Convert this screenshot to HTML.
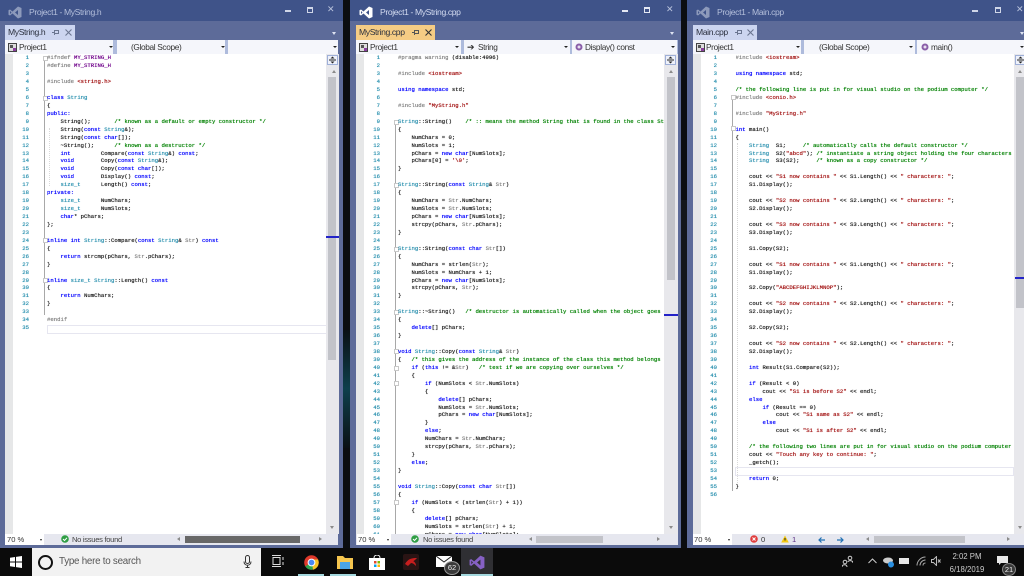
<!DOCTYPE html>
<html><head><meta charset="utf-8"><style>
html,body{margin:0;padding:0;width:1024px;height:576px;overflow:hidden;background:#0b0d10;font-family:"Liberation Sans",sans-serif}
div,pre,svg,span.a{position:absolute}
.pane{top:0;height:548px;background:#5d6b99;overflow:hidden}
.title{left:0;right:0;top:0;height:21px;background:#3f5389}
.tt{top:6px;font-size:8.6px;letter-spacing:-.38px;line-height:12px;color:#b4bfdb;white-space:nowrap}
.tab{top:25px;height:15px;background:#ccd5f0;color:#2a2f3d;font-size:8.6px;letter-spacing:-.38px;line-height:15px;white-space:nowrap}
.tab i{font-style:normal;padding-left:3px}
.strip{top:40px;height:14px;background:#aebbdc}
.dd{top:40px;height:14px;background:#f5f6fb;color:#333;font-size:8.3px;letter-spacing:-.35px;line-height:14px;white-space:nowrap}
.dd b{position:absolute;top:6px;width:0;height:0;border:2.2px solid transparent;border-top:2.6px solid #222;border-bottom:0}
.ed{top:54px;height:480px;background:#fff;overflow:hidden}
.mg{top:54px;height:480px;width:8px;background:#e6e7e8}
pre{margin:0;font:5.62px/7.945px "Liberation Mono",monospace;color:#222;top:54.3px;white-space:pre;overflow:hidden;height:479.7px;text-shadow:0 0 .5px currentColor}
.ln{color:#2b91af;text-align:right;width:22px}
.k{color:#0000ff}.t{color:#2b91af}.s{color:#a31515}.c{color:#008000}.p{color:#808080}
.sb{top:54px;height:480px;background:#e8e8ec}
.th{background:#c2c3c9}
.st{top:534px;height:11px;background:#e6e7ef;font-size:7.6px;letter-spacing:-.3px;line-height:12px;color:#333;white-space:nowrap}
.zm{top:534px;height:11px;background:#fff;color:#333;font-size:7.6px;line-height:11px}
.bar{width:1px;background:#a8a8a8}
.box{width:3px;height:3px;border:1px solid #c8c8c8;background:#fff}
.g{width:1px;border-left:1px dotted #d8d8d8}
.cur{height:7px;border:1px solid #e6e6f0;background:#fff}
</style></head><body>

<!-- desktop gap streak -->
<div style="left:343px;top:330px;width:7px;height:118px;background:linear-gradient(180deg,#0a1014,#0e3f4c 50%,#0a1014)"></div>
<div style="left:681px;top:200px;width:6px;height:250px;background:#12161c"></div>

<!-- PANE 1 -->
<div class="pane" style="left:0;width:343px"></div>
<div class="title" style="left:0;right:auto;width:343px"></div>
<svg style="left:8px;top:6px" width="14" height="13" viewBox="0 0 14 13"><path d="M10 .5L13.5 2v9L10 12.5 4.5 7.5 2 9.5.5 8.8V4.200L2 3.500l2.500 2zM2 5v3l1.500-1.500zM10 4L7 6.500 10 9z" fill="#8d9abb"/></svg>
<div class="tt" style="left:29px">Project1 - MyString.h</div>
<div style="left:285px;top:10px;width:6px;height:2px;background:#cfd6e8"></div>
<div style="left:307px;top:7px;width:4px;height:3px;border:1px solid #cfd6e8;border-top-width:2px"></div>
<div style="left:327px;top:3px;color:#b9c3dc;font-size:9px;line-height:12px">✕</div>
<div class="tab" style="left:5px;width:70px"><i>MyString.h</i><svg style="left:47px;top:4px" width="7" height="7"><path d="M0 3.500h2.500M2.500 1v5M2.500 1.500h4v3h-4" fill="none" stroke="#6b7691"/></svg><svg style="left:60px;top:4px" width="7" height="7"><path d="M.5.5l6 6M6.500.5l-6 6" stroke="#6b7691" stroke-width="1.100"/></svg></div>
<div style="left:332px;top:32px;border:2.500px solid transparent;border-top:3px solid #dfe4f2;border-bottom:0"></div>
<div class="strip" style="left:5px;width:333px"></div>
<div class="dd" style="left:5px;width:108px"><svg style="left:3px;top:3px" width="9" height="9"><rect x=".5" y=".5" width="8" height="8" fill="#ddd" stroke="#444"/><path d="M2 2h3v3H2z" fill="#555"/><path d="M5 5h3v3H5z" fill="#8a3f9e"/></svg><span class="a" style="left:14px">Project1</span><b style="left:104px"></b></div>
<div class="dd" style="left:117px;width:108px"><span class="a" style="left:14px">(Global Scope)</span><b style="left:104px"></b></div>
<div class="dd" style="left:228px;width:110px"><b style="left:105px"></b></div>
<div class="mg" style="left:5px"></div>
<div class="ed" style="left:13px;width:313px"></div>
<div class="cur" style="left:47px;top:325px;width:278px"></div>
<div class="bar" style="left:44px;top:60px;height:255px"></div>
<div class="box" style="left:42.500px;top:55.500px"></div><div class="box" style="left:42.500px;top:95.500px"></div><div class="box" style="left:42.500px;top:238px"></div><div class="box" style="left:42.500px;top:278px"></div>
<div class="g" style="left:49px;top:128px;height:58px"></div>
<pre class="ln" style="left:7px">1
2
3
4
5
6
7
8
9
10
11
12
13
14
15
16
17
18
19
20
21
22
23
24
25
26
27
28
29
30
31
32
33
34
35</pre>
<pre style="left:47px;width:279px"><span class="p">#ifndef</span> <span style="color:#6f008a">MY_STRING_H</span>
<span class="p">#define</span> <span style="color:#6f008a">MY_STRING_H</span>

<span class="p">#include</span> <span class="s">&lt;string.h&gt;</span>

<span class="k">class</span> <span class="t">String</span>
{
<span class="k">public:</span>
    String();       <span class="c">/* known as a default or empty constructor */</span>
    String(<span class="k">const</span> <span class="t">String</span>&amp;);
    String(<span class="k">const</span> <span class="k">char</span>[]);
    ~String();      <span class="c">/* known as a destructor */</span>
    <span class="k">int</span>         Compare(<span class="k">const</span> <span class="t">String</span>&amp;) <span class="k">const</span>;
    <span class="k">void</span>        Copy(<span class="k">const</span> <span class="t">String</span>&amp;);
    <span class="k">void</span>        Copy(<span class="k">const</span> <span class="k">char</span>[]);
    <span class="k">void</span>        Display() <span class="k">const</span>;
    <span class="t">size_t</span>      Length() <span class="k">const</span>;
<span class="k">private:</span>
    <span class="t">size_t</span>      NumChars;
    <span class="t">size_t</span>      NumSlots;
    <span class="k">char</span>* pChars;
};

<span class="k">inline</span> <span class="k">int</span> <span class="t">String</span>::Compare(<span class="k">const</span> <span class="t">String</span>&amp; <span class="p">Str</span>) <span class="k">const</span>
{
    <span class="k">return</span> strcmp(pChars, <span class="p">Str</span>.pChars);
}

<span class="k">inline</span> <span class="t">size_t</span> <span class="t">String</span>::Length() <span class="k">const</span>
{
    <span class="k">return</span> NumChars;
}

<span class="p">#endif</span></pre>
<div class="sb" style="left:326px;width:12.500px"></div>
<svg style="left:327px;top:55px" width="11" height="10"><rect x=".5" y=".5" width="10" height="9" fill="#eef1fa" stroke="#9fb0d8"/><path d="M2 5h7" stroke="#222"/><path d="M3.500 3.500h4L5.500 1.500zM3.500 6.500h4L5.500 8.500z" fill="#222"/></svg>
<div style="left:332px;top:70px;border:2.500px solid transparent;border-bottom:3px solid #8a8a8a;border-top:0"></div>
<div class="th" style="left:328px;top:77px;width:8px;height:283px"></div>
<div style="left:326px;top:236px;width:13px;height:2px;background:#2323c8"></div>
<div style="left:330px;top:526px;border:2.500px solid transparent;border-top:3px solid #8a8a8a;border-bottom:0"></div>
<div class="st" style="left:5px;width:333px"></div>
<div class="zm" style="left:5px;width:39px;padding-left:2px;box-sizing:border-box">70 %<b style="position:absolute;left:35px;top:5px;border:1.500px solid transparent;border-top:2px solid #222;border-bottom:0"></b></div>
<svg style="left:61px;top:535px" width="8" height="8"><circle cx="4" cy="4" r="3.800" fill="#2f9e44"/><path d="M2 4l1.500 1.500L6 2.800" stroke="#fff" fill="none"/></svg>
<div class="st" style="left:72px;background:none;color:#444">No issues found</div>
<div style="left:177px;top:537px;border:2.500px solid transparent;border-right:3px solid #8a8a8a;border-left:0"></div>
<div style="left:185px;top:536px;width:115px;height:7px;background:#686868"></div>
<div style="left:319px;top:537px;border:2.500px solid transparent;border-left:3px solid #8a8a8a;border-right:0"></div>

<!-- PANE 2 -->
<div class="pane" style="left:350px;width:331px"></div>
<div class="title" style="left:350px;right:auto;width:331px"></div>
<svg style="left:359px;top:6px" width="14" height="13" viewBox="0 0 14 13"><path d="M10 .5L13.500 2v9L10 12.500 4.500 7.500 2 9.500 .5 8.800V4.200L2 3.500l2.500 2zM2 5v3l1.500-1.500zM10 4L7 6.500 10 9z" fill="#fff"/></svg>
<div class="tt" style="left:380px;color:#d3dbf0">Project1 - MyString.cpp</div>
<div style="left:622px;top:10px;width:6px;height:2px;background:#e4e8f4"></div>
<div style="left:644px;top:7px;width:4px;height:3px;border:1px solid #e4e8f4;border-top-width:2px"></div>
<div style="left:666px;top:3px;color:#b9c3dc;font-size:9px;line-height:12px">✕</div>
<div class="tab" style="left:356px;width:79px;background:#f5cc84"><i>MyString.cpp</i><svg style="left:56px;top:4px" width="7" height="7"><path d="M0 3.500h2.500M2.500 1v5M2.500 1.500h4v3h-4" fill="none" stroke="#555"/></svg><svg style="left:69px;top:4px" width="7" height="7"><path d="M.5.5l6 6M6.500.5l-6 6" stroke="#333" stroke-width="1.100"/></svg></div>
<div style="left:670px;top:32px;border:2.500px solid transparent;border-top:3px solid #dfe4f2;border-bottom:0"></div>
<div class="strip" style="left:356px;width:322px"></div>
<div class="dd" style="left:356px;width:105px"><svg style="left:3px;top:3px" width="9" height="9"><rect x=".5" y=".5" width="8" height="8" fill="#ddd" stroke="#444"/><path d="M2 2h3v3H2z" fill="#555"/><path d="M5 5h3v3H5z" fill="#8a3f9e"/></svg><span class="a" style="left:14px">Project1</span><b style="left:99px"></b></div>
<div class="dd" style="left:464px;width:106px"><span class="a" style="left:3px;font-size:9px">➔</span><span class="a" style="left:14px">String</span><b style="left:100px"></b></div>
<div class="dd" style="left:572px;width:105px"><svg style="left:3px;top:3px" width="8" height="8"><circle cx="4" cy="4" r="3.500" fill="#8a5ea8"/><circle cx="4" cy="4" r="1.500" fill="#e8def0"/></svg><span class="a" style="left:13px">Display() const</span><b style="left:99px"></b></div>
<div class="mg" style="left:356px"></div>
<div class="ed" style="left:364px;width:300px"></div>
<div class="bar" style="left:395px;top:125px;height:409px"></div>
<div class="box" style="left:393.500px;top:120px"></div><div class="box" style="left:393.500px;top:183px"></div><div class="box" style="left:393.500px;top:247px"></div><div class="box" style="left:393.500px;top:310px"></div><div class="box" style="left:393.500px;top:349px"></div><div class="box" style="left:393.500px;top:366px"></div><div class="box" style="left:393.500px;top:381px"></div><div class="box" style="left:393.500px;top:500px"></div>
<pre class="ln" style="left:358px">1
2
3
4
5
6
7
8
9
10
11
12
13
14
15
16
17
18
19
20
21
22
23
24
25
26
27
28
29
30
31
32
33
34
35
36
37
38
39
40
41
42
43
44
45
46
47
48
49
50
51
52
53
54
55
56
57
58
59
60
61</pre>
<pre style="left:398px;width:266px"><span class="p">#pragma warning</span> (disable:4996)

<span class="p">#include</span> <span class="s">&lt;iostream&gt;</span>

<span class="k">using</span> <span class="k">namespace</span> std;

<span class="p">#include</span> <span class="s">"MyString.h"</span>

<span class="t">String</span>::String()    <span class="c">/* :: means the method String that is found in the class String */</span>
{
    NumChars = 0;
    NumSlots = 1;
    pChars = <span class="k">new</span> <span class="k">char</span>[NumSlots];
    pChars[0] = <span class="s">'\0'</span>;
}

<span class="t">String</span>::String(<span class="k">const</span> <span class="t">String</span>&amp; <span class="p">Str</span>)
{
    NumChars = <span class="p">Str</span>.NumChars;
    NumSlots = <span class="p">Str</span>.NumSlots;
    pChars = <span class="k">new</span> <span class="k">char</span>[NumSlots];
    strcpy(pChars, <span class="p">Str</span>.pChars);
}

<span class="t">String</span>::String(<span class="k">const</span> <span class="k">char</span> <span class="p">Str</span>[])
{
    NumChars = strlen(<span class="p">Str</span>);
    NumSlots = NumChars + 1;
    pChars = <span class="k">new</span> <span class="k">char</span>[NumSlots];
    strcpy(pChars, <span class="p">Str</span>);
}

<span class="t">String</span>::~String()   <span class="c">/* destructor is automatically called when the object goes out of scope */</span>
{
    <span class="k">delete</span>[] pChars;
}

<span class="k">void</span> <span class="t">String</span>::Copy(<span class="k">const</span> <span class="t">String</span>&amp; <span class="p">Str</span>)
{   <span class="c">/* this gives the address of the instance of the class this method belongs to */</span>
    <span class="k">if</span> (<span class="k">this</span> != &amp;<span class="p">Str</span>)   <span class="c">/* test if we are copying over ourselves */</span>
    {
        <span class="k">if</span> (NumSlots &lt; <span class="p">Str</span>.NumSlots)
        {
            <span class="k">delete</span>[] pChars;
            NumSlots = <span class="p">Str</span>.NumSlots;
            pChars = <span class="k">new</span> <span class="k">char</span>[NumSlots];
        }
        <span class="k">else</span>;
        NumChars = <span class="p">Str</span>.NumChars;
        strcpy(pChars, <span class="p">Str</span>.pChars);
    }
    <span class="k">else</span>;
}

<span class="k">void</span> <span class="t">String</span>::Copy(<span class="k">const</span> <span class="k">char</span> <span class="p">Str</span>[])
{
    <span class="k">if</span> (NumSlots &lt; (strlen(<span class="p">Str</span>) + 1))
    {
        <span class="k">delete</span>[] pChars;
        NumSlots = strlen(<span class="p">Str</span>) + 1;
        pChars = <span class="k">new</span> <span class="k">char</span>[NumSlots];</pre>
<div class="sb" style="left:664px;width:14px"></div>
<svg style="left:665px;top:55px" width="11" height="10"><rect x=".5" y=".5" width="10" height="9" fill="#eef1fa" stroke="#9fb0d8"/><path d="M2 5h7" stroke="#222"/><path d="M3.500 3.500h4L5.500 1.500zM3.500 6.500h4L5.500 8.500z" fill="#222"/></svg>
<div style="left:669px;top:70px;border:2.500px solid transparent;border-bottom:3px solid #8a8a8a;border-top:0"></div>
<div class="th" style="left:667px;top:77px;width:8px;height:203px"></div>
<div style="left:664px;top:314px;width:14px;height:1.500px;background:#2323c8"></div>
<div style="left:669px;top:526px;border:2.500px solid transparent;border-top:3px solid #8a8a8a;border-bottom:0"></div>
<div class="st" style="left:356px;width:322px"></div>
<div class="zm" style="left:357px;width:34px;padding-left:1px;box-sizing:border-box">70 %<b style="position:absolute;left:30px;top:5px;border:1.500px solid transparent;border-top:2px solid #222;border-bottom:0"></b></div>
<svg style="left:411px;top:535px" width="8" height="8"><circle cx="4" cy="4" r="3.800" fill="#2f9e44"/><path d="M2 4l1.500 1.500L6 2.800" stroke="#fff" fill="none"/></svg>
<div class="st" style="left:423px;background:none;color:#444">No issues found</div>
<div style="left:529px;top:537px;border:2.500px solid transparent;border-right:3px solid #8a8a8a;border-left:0"></div>
<div class="th" style="left:536px;top:536px;width:67px;height:7px"></div>
<div style="left:657px;top:537px;border:2.500px solid transparent;border-left:3px solid #8a8a8a;border-right:0"></div>

<!-- PANE 3 -->
<div class="pane" style="left:687px;width:337px"></div>
<div class="title" style="left:687px;right:auto;width:337px"></div>
<svg style="left:696px;top:6px" width="14" height="13" viewBox="0 0 14 13"><path d="M10 .5L13.500 2v9L10 12.500 4.500 7.500 2 9.500 .5 8.800V4.200L2 3.500l2.500 2zM2 5v3l1.500-1.500zM10 4L7 6.500 10 9z" fill="#8d9abb"/></svg>
<div class="tt" style="left:717px">Project1 - Main.cpp</div>
<div style="left:972px;top:10px;width:6px;height:2px;background:#cfd6e8"></div>
<div style="left:995px;top:7px;width:4px;height:3px;border:1px solid #cfd6e8;border-top-width:2px"></div>
<div style="left:1016px;top:3px;color:#b9c3dc;font-size:9px;line-height:12px">✕</div>
<div class="tab" style="left:693px;width:64px"><i>Main.cpp</i><svg style="left:42px;top:4px" width="7" height="7"><path d="M0 3.500h2.500M2.500 1v5M2.500 1.500h4v3h-4" fill="none" stroke="#6b7691"/></svg><svg style="left:54px;top:4px" width="7" height="7"><path d="M.5.5l6 6M6.500.5l-6 6" stroke="#6b7691" stroke-width="1.100"/></svg></div>
<div style="left:1020px;top:32px;border:2.500px solid transparent;border-top:3px solid #dfe4f2;border-bottom:0"></div>
<div class="strip" style="left:693px;width:331px"></div>
<div class="dd" style="left:693px;width:108px"><svg style="left:3px;top:3px" width="9" height="9"><rect x=".5" y=".5" width="8" height="8" fill="#ddd" stroke="#444"/><path d="M2 2h3v3H2z" fill="#555"/><path d="M5 5h3v3H5z" fill="#8a3f9e"/></svg><span class="a" style="left:13px">Project1</span><b style="left:103px"></b></div>
<div class="dd" style="left:804px;width:111px"><span class="a" style="left:15px">(Global Scope)</span><b style="left:105px"></b></div>
<div class="dd" style="left:917px;width:107px"><svg style="left:4px;top:3px" width="8" height="8"><circle cx="4" cy="4" r="3.500" fill="#8a5ea8"/><circle cx="4" cy="4" r="1.500" fill="#e8def0"/></svg><span class="a" style="left:14px">main()</span><b style="left:103px"></b></div>
<div class="mg" style="left:693px"></div>
<div class="ed" style="left:701px;width:313px"></div>
<div class="cur" style="left:735px;top:467px;width:277px"></div>
<div class="bar" style="left:732px;top:100px;height:391px"></div>
<div class="box" style="left:730.500px;top:95px"></div><div class="box" style="left:730.500px;top:126px"></div>
<div class="g" style="left:737px;top:143px;height:340px"></div>
<pre class="ln" style="left:695px">1
2
3
4
5
6
7
8
9
10
11
12
13
14
15
16
17
18
19
20
21
22
23
24
25
26
27
28
29
30
31
32
33
34
35
36
37
38
39
40
41
42
43
44
45
46
47
48
49
50
51
52
53
54
55
56</pre>
<pre style="left:735.500px;width:279px"><span class="p">#include</span> <span class="s">&lt;iostream&gt;</span>

<span class="k">using</span> <span class="k">namespace</span> std;

<span class="c">/* the following line is put in for visual studio on the podium computer */</span>
<span class="p">#include</span> <span class="s">&lt;conio.h&gt;</span>

<span class="p">#include</span> <span class="s">"MyString.h"</span>

<span class="k">int</span> main()
{
    <span class="t">String</span>  S1;     <span class="c">/* automatically calls the default constructor */</span>
    <span class="t">String</span>  S2(<span class="s">"abcd"</span>); <span class="c">/* instantiate a string object holding the four characters abcd */</span>
    <span class="t">String</span>  S3(S2);     <span class="c">/* known as a copy constructor */</span>

    cout &lt;&lt; <span class="s">"S1 now contains "</span> &lt;&lt; S1.Length() &lt;&lt; <span class="s">" characters: "</span>;
    S1.Display();

    cout &lt;&lt; <span class="s">"S2 now contains "</span> &lt;&lt; S2.Length() &lt;&lt; <span class="s">" characters: "</span>;
    S2.Display();

    cout &lt;&lt; <span class="s">"S3 now contains "</span> &lt;&lt; S3.Length() &lt;&lt; <span class="s">" characters: "</span>;
    S3.Display();

    S1.Copy(S2);

    cout &lt;&lt; <span class="s">"S1 now contains "</span> &lt;&lt; S1.Length() &lt;&lt; <span class="s">" characters: "</span>;
    S1.Display();

    S2.Copy(<span class="s">"ABCDEFGHIJKLMNOP"</span>);

    cout &lt;&lt; <span class="s">"S2 now contains "</span> &lt;&lt; S2.Length() &lt;&lt; <span class="s">" characters: "</span>;
    S2.Display();

    S2.Copy(S2);

    cout &lt;&lt; <span class="s">"S2 now contains "</span> &lt;&lt; S2.Length() &lt;&lt; <span class="s">" characters: "</span>;
    S2.Display();

    <span class="k">int</span> Result(S1.Compare(S2));

    <span class="k">if</span> (Result &lt; 0)
        cout &lt;&lt; <span class="s">"S1 is before S2"</span> &lt;&lt; endl;
    <span class="k">else</span>
        <span class="k">if</span> (Result == 0)
            cout &lt;&lt; <span class="s">"S1 same as S2"</span> &lt;&lt; endl;
        <span class="k">else</span>
            cout &lt;&lt; <span class="s">"S1 is after S2"</span> &lt;&lt; endl;

    <span class="c">/* the following two lines are put in for visual studio on the podium computer */</span>
    cout &lt;&lt; <span class="s">"Touch any key to continue: "</span>;
    _getch();

    <span class="k">return</span> 0;
}</pre>
<div class="sb" style="left:1014px;width:10px"></div>
<svg style="left:1015px;top:55px" width="9" height="10"><rect x=".5" y=".5" width="10" height="9" fill="#eef1fa" stroke="#9fb0d8"/><path d="M2 5h7" stroke="#222"/><path d="M3.500 3.500h4L5.500 1.500zM3.500 6.500h4L5.500 8.500z" fill="#222"/></svg>
<div style="left:1018px;top:70px;border:2.500px solid transparent;border-bottom:3px solid #8a8a8a;border-top:0"></div>
<div class="th" style="left:1016px;top:77px;width:8px;height:231px"></div>
<div style="left:1015px;top:277px;width:9px;height:1.500px;background:#2323c8"></div>
<div style="left:1018px;top:526px;border:2.500px solid transparent;border-top:3px solid #8a8a8a;border-bottom:0"></div>
<div class="st" style="left:693px;width:331px"></div>
<div class="zm" style="left:693px;width:39px;padding-left:1px;box-sizing:border-box">70 %<b style="position:absolute;left:35px;top:5px;border:1.500px solid transparent;border-top:2px solid #222;border-bottom:0"></b></div>
<svg style="left:750px;top:535px" width="8" height="8"><circle cx="4" cy="4" r="3.800" fill="#e03c3c"/><path d="M2.500 2.500l3 3M5.500 2.500l-3 3" stroke="#fff"/></svg>
<div class="st" style="left:761px;background:none">0</div>
<svg style="left:781px;top:535px" width="8" height="8"><path d="M4 .5L7.800 7.500H.2z" fill="#f2c811"/><path d="M4 3v2.500" stroke="#222"/></svg>
<div class="st" style="left:792px;background:none;color:#5a2d82">1</div>
<svg style="left:818px;top:537px" width="7" height="6"><path d="M7 3H1M3.500.5L1 3l2.500 2.500" fill="none" stroke="#1f6fb2" stroke-width="1.200"/></svg>
<svg style="left:837px;top:537px" width="7" height="6"><path d="M0 3h6M3.500.5L6 3 3.500 5.500" fill="none" stroke="#1f6fb2" stroke-width="1.200"/></svg>
<div style="left:866px;top:537px;border:2.500px solid transparent;border-right:3px solid #8a8a8a;border-left:0"></div>
<div class="th" style="left:874px;top:536px;width:91px;height:7px"></div>
<div style="left:1007px;top:537px;border:2.500px solid transparent;border-left:3px solid #8a8a8a;border-right:0"></div>

<!-- TASKBAR -->
<div style="left:0;top:548px;width:1024px;height:28px;background:#0b0b0b"></div>
<svg style="left:10px;top:556px" width="12" height="12"><path d="M0 1.800L5 1v4.500H0zM6 .9L12 0v5.500H6zM0 6.500h5V11l-5-.8zM6 6.500h6V12l-6-.9z" fill="#fff"/></svg>
<div style="left:32px;top:548px;width:229px;height:28px;background:#f2f2f2"></div>
<div style="left:38px;top:555px;width:11px;height:11px;border:2px solid #111;border-radius:50%"></div>
<div style="left:59px;top:555px;font-size:9.800px;letter-spacing:-.25px;line-height:14px;color:#555;white-space:nowrap">Type here to search</div>
<svg style="left:243px;top:555px" width="9" height="13"><rect x="2.500" y=".5" width="4" height="8" rx="2" fill="none" stroke="#333"/><path d="M1 6.500c0 5 7 5 7 0M4.500 10v2.500M2.500 12.500h4" fill="none" stroke="#333"/></svg>
<svg style="left:271px;top:555px" width="13" height="12"><rect x="2" y="2.500" width="7" height="7" fill="none" stroke="#ddd"/><path d="M1 .5h9M1 11.500h9M12 2v3M12 7v3" stroke="#ddd"/></svg>
<svg style="left:304px;top:555px" width="15" height="15"><circle cx="7.500" cy="7.500" r="7.300" fill="#e0392b"/><path d="M7.500 7.500L1.300 11.300A7.300 7.300 0 0 0 7.500 14.800A7.300 7.300 0 0 0 14.200 5z" fill="#2da44e"/><path d="M7.500 4.500h6.500A7.300 7.300 0 0 1 9 14.700z" fill="#f7c325"/><circle cx="7.500" cy="7.500" r="3.400" fill="#4a8af4" stroke="#fff"/></svg>
<div style="left:298px;top:574px;width:26px;height:2px;background:#a4d8de"></div>
<svg style="left:337px;top:556px" width="16" height="13"><path d="M0 0h6l2 2h8v11H0z" fill="#f6c64f"/><rect x="3" y="6" width="10" height="7" fill="#4aa4e8"/></svg>
<div style="left:330px;top:574px;width:26px;height:2px;background:#a4d8de"></div>
<svg style="left:369px;top:555px" width="16" height="15"><rect y="3" width="16" height="12" fill="#fff"/><path d="M5 3c0-4 6-4 6 0" fill="none" stroke="#fff"/><rect x="5" y="6" width="2.500" height="2.500" fill="#e2492f"/><rect x="8.500" y="6" width="2.500" height="2.500" fill="#7fba00"/><rect x="5" y="9.500" width="2.500" height="2.500" fill="#00a4ef"/><rect x="8.500" y="9.500" width="2.500" height="2.500" fill="#ffb900"/></svg>
<svg style="left:403px;top:554px" width="16" height="16"><rect width="16" height="16" rx="2" fill="#2a1414"/><path d="M2 10c3-5 6-6 12-6-2 2-3 3-4 3 2 1 3 3 3 5-2-2-3-3-5-3l-3 3z" fill="#c81e1e"/></svg>
<svg style="left:436px;top:556px" width="16" height="12"><rect width="16" height="11" fill="#fff"/><path d="M0 0l8 6 8-6" fill="none" stroke="#222"/></svg>
<div style="left:444px;top:561px;width:14px;height:12px;border-radius:50%;background:#3a3a3a;border:1px solid #999;color:#eee;font-size:7.500px;line-height:12px;text-align:center">62</div>
<div style="left:461px;top:548px;width:32px;height:28px;background:#2f2f33"></div>
<svg style="left:469px;top:555px" width="16" height="15" viewBox="0 0 14 13"><path d="M10 .5L13.500 2v9L10 12.500 4.500 7.500 2 9.500 .5 8.800V4.200L2 3.500l2.500 2zM2 5v3l1.500-1.500zM10 4L7 6.500 10 9z" fill="#8661c5"/></svg>
<div style="left:461px;top:574px;width:32px;height:2px;background:#a4d8de"></div>

<svg style="left:842px;top:555px" width="11" height="12"><circle cx="3" cy="7" r="1.800" fill="none" stroke="#ccc"/><circle cx="8" cy="3" r="1.800" fill="none" stroke="#ccc"/><path d="M0 12c0-3 5-3 5 0M6 7c0-2 5-2 5 1" fill="none" stroke="#ccc"/></svg>
<svg style="left:868px;top:558px" width="9" height="6"><path d="M.5 5l4-4 4 4" fill="none" stroke="#ccc"/></svg>
<svg style="left:883px;top:556px" width="11" height="12"><ellipse cx="5" cy="4.500" rx="5" ry="3" fill="#ccc"/><circle cx="8" cy="8.500" r="3" fill="#2a8fe0"/></svg>
<div style="left:899px;top:558px;width:10px;height:6px;background:#e8e8e8"></div>
<svg style="left:916px;top:556px" width="10" height="10"><path d="M1 9.500C1 5 5 1 9.500 1M4 9.500c0-3 2.500-5.500 5.500-5.500M7 9.500c0-1.500 1-2.500 2.500-2.500" fill="none" stroke="#aaa"/></svg>
<svg style="left:931px;top:556px" width="10" height="10"><path d="M.5 3.500h2l3-3v9l-3-3h-2z" fill="none" stroke="#bbb"/><path d="M7 3.500l2.500 3M9.500 3.500L7 6.500" stroke="#bbb"/></svg>
<div style="left:949px;top:551px;width:36px;text-align:center;color:#ccc;font-size:7.800px;line-height:12px;white-space:nowrap">2:02 PM</div>
<div style="left:949px;top:564px;width:36px;text-align:center;color:#ccc;font-size:7.800px;line-height:12px;white-space:nowrap">6/18/2019</div>
<svg style="left:997px;top:556px" width="11" height="10"><path d="M0 0h11v7H4l-2 2V7H0z" fill="#e8e8e8"/></svg>
<div style="left:1002px;top:563px;width:12px;height:11px;border-radius:50%;background:#3a3a3a;border:1px solid #888;color:#eee;font-size:7.500px;line-height:11px;text-align:center">21</div>
</body></html>
